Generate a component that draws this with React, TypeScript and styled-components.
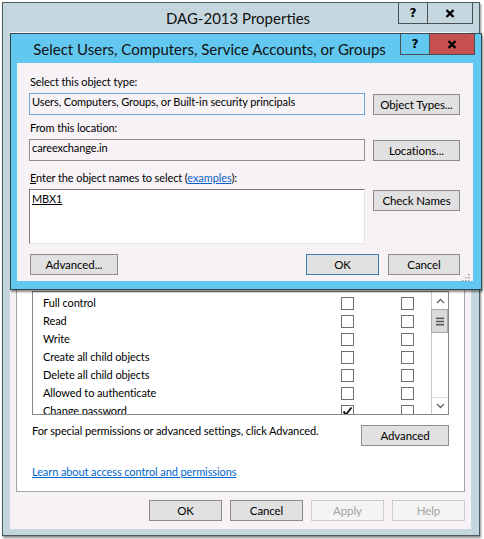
import React from "react";
import styled, { createGlobalStyle } from "styled-components";

const UI_FONT = `Lato, "Noto Sans", "Liberation Sans", sans-serif`;

const GlobalStyle = createGlobalStyle`
  html, body {
    margin: 0;
    padding: 0;
    background: #ffffff;
  }
  body {
    font-family: ${UI_FONT};
    font-size: 11px;
    letter-spacing: -0.1px;
    color: #000;
  }
  * {
    box-sizing: border-box;
  }
`;

const Desktop = styled.div`
  position: relative;
  width: 484px;
  height: 539px;
  overflow: hidden;
  background: #ffffff;
`;

type WindowProps = {
  $left: number;
  $top: number;
  $width: number;
  $height: number;
  $frame: string;
  $edge: string;
  $pad: string;
};

// windows sit on a free desktop, so they are placed by coordinates
const Window = styled.div<WindowProps>`
  position: absolute;
  left: ${(p) => p.$left}px;
  top: ${(p) => p.$top}px;
  width: ${(p) => p.$width}px;
  height: ${(p) => p.$height}px;
  display: flex;
  flex-direction: column;
  background: ${(p) => p.$frame};
  border: 1px solid ${(p) => p.$edge};
  padding: ${(p) => p.$pad};
  box-shadow: 1px 2px 2px rgba(0, 0, 0, 0.45);
`;

const TitleBar = styled.div<{ $centered?: boolean; $inset: string }>`
  height: 29px;
  flex: none;
  display: grid;
  grid-template-columns: ${(p) => (p.$centered ? "1fr auto 1fr" : "1fr auto")};
  align-items: start;
  margin: ${(p) => p.$inset};
  padding-right: 6px;
`;

const Title = styled.div<{ $indent?: number }>`
  align-self: center;
  text-align: center;
  font-size: 15px;
  letter-spacing: 0;
  line-height: 20px;
  color: #111;
  white-space: nowrap;
  padding-left: ${(p) => p.$indent ?? 0}px;
  padding-top: 1px;
`;

const CaptionGroup = styled.div`
  grid-column: -2;
  justify-self: end;
  display: flex;
  border: 1px solid #4a4f52;
  border-top: none;
`;

const CaptionButton = styled.div<{ $w: number; $bg: string }>`
  width: ${(p) => p.$w}px;
  height: 20px;
  background: ${(p) => p.$bg};
  display: flex;
  align-items: center;
  justify-content: center;
  & + & {
    border-left: 1px solid #4a4f52;
  }
`;

const HelpGlyph = styled.span`
  font-family: "DejaVu Sans", "Liberation Sans", sans-serif;
  font-weight: 700;
  font-size: 12px;
  line-height: 12px;
  letter-spacing: 0;
  color: #000;
`;

const CloseGlyph = () => (
  <svg width="10" height="9" viewBox="0 0 10 9">
    <path d="M1.5 1 L8.5 8 M8.5 1 L1.5 8" stroke="#000" strokeWidth="2.4" />
  </svg>
);

const Body = styled.div`
  position: relative;
  flex: 1;
  background: #f6f2f6;
  display: flex;
  flex-direction: column;
`;

const InnerBody = styled(Body)`
  padding: 11px 13px 0 12px;
`;

const OuterBody = styled(Body)`
  padding: 26px 6px 0 6px;
`;

const FieldLabel = styled.div<{ $mt?: number }>`
  margin-top: ${(p) => p.$mt ?? 0}px;
  padding-left: 1px;
  line-height: 15px;
  white-space: nowrap;
`;

const Key = styled.span`
  text-decoration: underline;
`;

const Link = styled.span`
  color: #0b63c8;
  text-decoration: underline;
`;

const FieldRow = styled.div<{ $mt?: number }>`
  margin-top: ${(p) => p.$mt ?? 0}px;
  display: grid;
  grid-template-columns: 336px 87px;
  column-gap: 8px;
  align-items: start;
  & > button {
    margin-top: 1px;
  }
`;

const TextBox = styled.div<{ $focus?: boolean }>`
  height: 22px;
  border: 1px solid ${(p) => (p.$focus ? "#6fa9dc" : "#8f8f8f")};
  background: #f6f2f6;
  padding: 0 2px;
  line-height: 16px;
  white-space: nowrap;
  overflow: hidden;
`;

const NamesArea = styled.div`
  height: 55px;
  background: #ffffff;
  border: 1px solid #e3e3e3;
  border-top-color: #7a7a7a;
  border-left-color: #7a7a7a;
  padding: 1px 2px 0 2px;
  line-height: 15px;
`;

const Underlined = styled.span`
  text-decoration: underline;
`;

const Button = styled.button<{ $w: number; $default?: boolean; $disabled?: boolean }>`
  width: ${(p) => p.$w}px;
  height: 21px;
  padding: 0;
  font-family: ${UI_FONT};
  font-size: 11.5px;
  letter-spacing: -0.1px;
  line-height: 19px;
  color: ${(p) => (p.$disabled ? "#a3a3a3" : "#000")};
  background: ${(p) => (p.$disabled ? "#f4f4f4" : "#e1e1e1")};
  border: 1px solid
    ${(p) => (p.$default ? "#3c7fb1" : p.$disabled ? "#cdcdcd" : "#8c8c8c")};
  border-radius: 0;
  text-align: center;
  white-space: nowrap;
`;

const DialogActions = styled.div`
  margin-top: 10px;
  padding-left: 1px;
  display: flex;
  gap: 9px;
  & > button:first-child {
    margin-right: auto;
  }
`;

const GripBox = styled.div`
  position: absolute;
  right: 3px;
  bottom: 1px;
  width: 9px;
  height: 9px;
`;

const ResizeGrip = () => (
  <GripBox>
    <svg width="9" height="9" viewBox="0 0 9 9">
      {[
        [7, 1],
        [4, 4],
        [7, 4],
        [1, 7],
        [4, 7],
        [7, 7],
      ].map(([x, y]) => (
        <rect key={`${x}-${y}`} x={x} y={y} width="1.5" height="1.5" fill="#a0a0a0" />
      ))}
    </svg>
  </GripBox>
);

const TabPanel = styled.div`
  background: #ffffff;
  border: 1px solid #a6a6a6;
  padding: 10px 15px 12px 15px;
  display: flex;
  flex-direction: column;
`;

// the part of the sheet that the picker dialog covers
const CoveredArea = styled.div`
  height: 222px;
`;

const PermList = styled.div`
  height: 124px;
  display: flex;
  border: 1px solid #828790;
  background: #ffffff;
  overflow: hidden;
`;

const PermRows = styled.div`
  flex: 1;
  padding-top: 2px;
  overflow: hidden;
`;

const PermRow = styled.div`
  display: grid;
  grid-template-columns: 298px 13px 47px 13px;
  align-items: center;
  height: 18px;
  line-height: 18px;
  padding-left: 10px;
  white-space: nowrap;
`;

const CheckBox = styled.div`
  width: 13px;
  height: 13px;
  border: 1px solid #707070;
  background: #ffffff;
  display: flex;
  align-items: center;
  justify-content: center;
`;

const CheckMark = () => (
  <svg width="11" height="11" viewBox="0 0 11 11">
    <path d="M1.5 5.5 L4 8.5 L9.5 1.5" fill="none" stroke="#1a1a1a" strokeWidth="2" />
  </svg>
);

const ScrollBar = styled.div`
  width: 17px;
  flex: none;
  display: flex;
  flex-direction: column;
  border-left: 1px solid #c8c8c8;
  background: #ffffff;
`;

const ScrollArrow = styled.div<{ $down?: boolean }>`
  height: 17px;
  flex: none;
  display: flex;
  align-items: center;
  justify-content: center;
  border-top: ${(p) => (p.$down ? "1px solid #dcdcdc" : "none")};
`;

const ScrollTrack = styled.div`
  flex: 1;
`;

const ScrollThumb = styled.div`
  height: 24px;
  margin-left: -1px;
  background: #dadada;
  border: 1px solid #a8a8a8;
  display: flex;
  align-items: center;
  justify-content: center;
`;

const Chevron = ({ down }: { down?: boolean }) => (
  <svg width="9" height="6" viewBox="0 0 9 6">
    <path
      d={down ? "M1 1 L4.5 4.5 L8 1" : "M1 5 L4.5 1.5 L8 5"}
      fill="none"
      stroke="#606060"
      strokeWidth="1.3"
    />
  </svg>
);

const GripLines = () => (
  <svg width="8" height="9" viewBox="0 0 8 9">
    <rect x="0" y="0.5" width="8" height="1.6" fill="#5c5c5c" />
    <rect x="0" y="3.7" width="8" height="1.6" fill="#5c5c5c" />
    <rect x="0" y="6.9" width="8" height="1.6" fill="#5c5c5c" />
  </svg>
);

const AdvancedRow = styled.div`
  margin-top: 8px;
  display: flex;
  justify-content: space-between;
  align-items: flex-start;
  line-height: 15px;
  & > button {
    margin-top: 2px;
  }
`;

const HelpLink = styled(Link)`
  display: block;
  margin-top: 18px;
  line-height: 15px;
  color: #0066cc;
`;

const SheetActions = styled.div`
  margin-top: 8px;
  display: flex;
  justify-content: flex-end;
  gap: 8px;
`;

const permissions = [
  { name: "Full control", allow: false },
  { name: "Read", allow: false },
  { name: "Write", allow: false },
  { name: "Create all child objects", allow: false },
  { name: "Delete all child objects", allow: false },
  { name: "Allowed to authenticate", allow: false },
  { name: "Change password", allow: true },
];

const PropertiesWindow = () => (
  <Window
    $left={2}
    $top={2}
    $width={478}
    $height={534}
    $frame="#c5d7de"
    $edge="#4d5b61"
    $pad="0 8px 6px 7px"
  >
    <TitleBar $centered $inset="0 -8px 0 -7px">
      <span />
      <Title>DAG-2013 Properties</Title>
      <CaptionGroup>
        <CaptionButton $w={28} $bg="#c5d7de">
          <HelpGlyph>?</HelpGlyph>
        </CaptionButton>
        <CaptionButton $w={45} $bg="#c5d7de">
          <CloseGlyph />
        </CaptionButton>
      </CaptionGroup>
    </TitleBar>
    <OuterBody>
      <TabPanel>
        <CoveredArea />
        <PermList>
          <PermRows>
            {permissions.map((perm) => (
              <PermRow key={perm.name}>
                <span>{perm.name}</span>
                <CheckBox>{perm.allow && <CheckMark />}</CheckBox>
                <span />
                <CheckBox />
              </PermRow>
            ))}
          </PermRows>
          <ScrollBar>
            <ScrollArrow>
              <Chevron />
            </ScrollArrow>
            <ScrollThumb>
              <GripLines />
            </ScrollThumb>
            <ScrollTrack />
            <ScrollArrow $down>
              <Chevron down />
            </ScrollArrow>
          </ScrollBar>
        </PermList>
        <AdvancedRow>
          <span>For special permissions or advanced settings, click Advanced.</span>
          <Button $w={88}>Advanced</Button>
        </AdvancedRow>
        <HelpLink>Learn about access control and permissions</HelpLink>
      </TabPanel>
      <SheetActions>
        <Button $w={73}>OK</Button>
        <Button $w={73}>Cancel</Button>
        <Button $w={73} $disabled>
          Apply
        </Button>
        <Button $w={73} $disabled>
          Help
        </Button>
      </SheetActions>
    </OuterBody>
  </Window>
);

const SelectDialog = () => (
  <Window
    $left={10}
    $top={33}
    $width={472}
    $height={257}
    $frame="#62c8ef"
    $edge="#3a4650"
    $pad="0 8px 8px 6px"
  >
    <TitleBar $inset="0 -8px 0 -6px">
      <Title $indent={8}>Select Users, Computers, Service Accounts, or Groups</Title>
      <CaptionGroup>
        <CaptionButton $w={28} $bg="#62c8ef">
          <HelpGlyph>?</HelpGlyph>
        </CaptionButton>
        <CaptionButton $w={45} $bg="#c75050">
          <CloseGlyph />
        </CaptionButton>
      </CaptionGroup>
    </TitleBar>
    <InnerBody>
      <FieldLabel>Select this object type:</FieldLabel>
      <FieldRow $mt={4}>
        <TextBox $focus>Users, Computers, Groups, or Built-in security principals</TextBox>
        <Button $w={87}>Object Types...</Button>
      </FieldRow>
      <FieldLabel $mt={5}>From this location:</FieldLabel>
      <FieldRow $mt={4}>
        <TextBox>careexchange.in</TextBox>
        <Button $w={87}>Locations...</Button>
      </FieldRow>
      <FieldLabel $mt={9}>
        <Key>E</Key>nter the object names to select (<Link>examples</Link>):
      </FieldLabel>
      <FieldRow $mt={4}>
        <NamesArea>
          <Underlined>MBX1</Underlined>
        </NamesArea>
        <Button $w={87}>Check Names</Button>
      </FieldRow>
      <DialogActions>
        <Button $w={88}>Advanced...</Button>
        <Button $w={73} $default>
          OK
        </Button>
        <Button $w={72}>Cancel</Button>
      </DialogActions>
      <ResizeGrip />
    </InnerBody>
  </Window>
);

export default function App() {
  return (
    <>
      <GlobalStyle />
      <Desktop>
        <PropertiesWindow />
        <SelectDialog />
      </Desktop>
    </>
  );
}
